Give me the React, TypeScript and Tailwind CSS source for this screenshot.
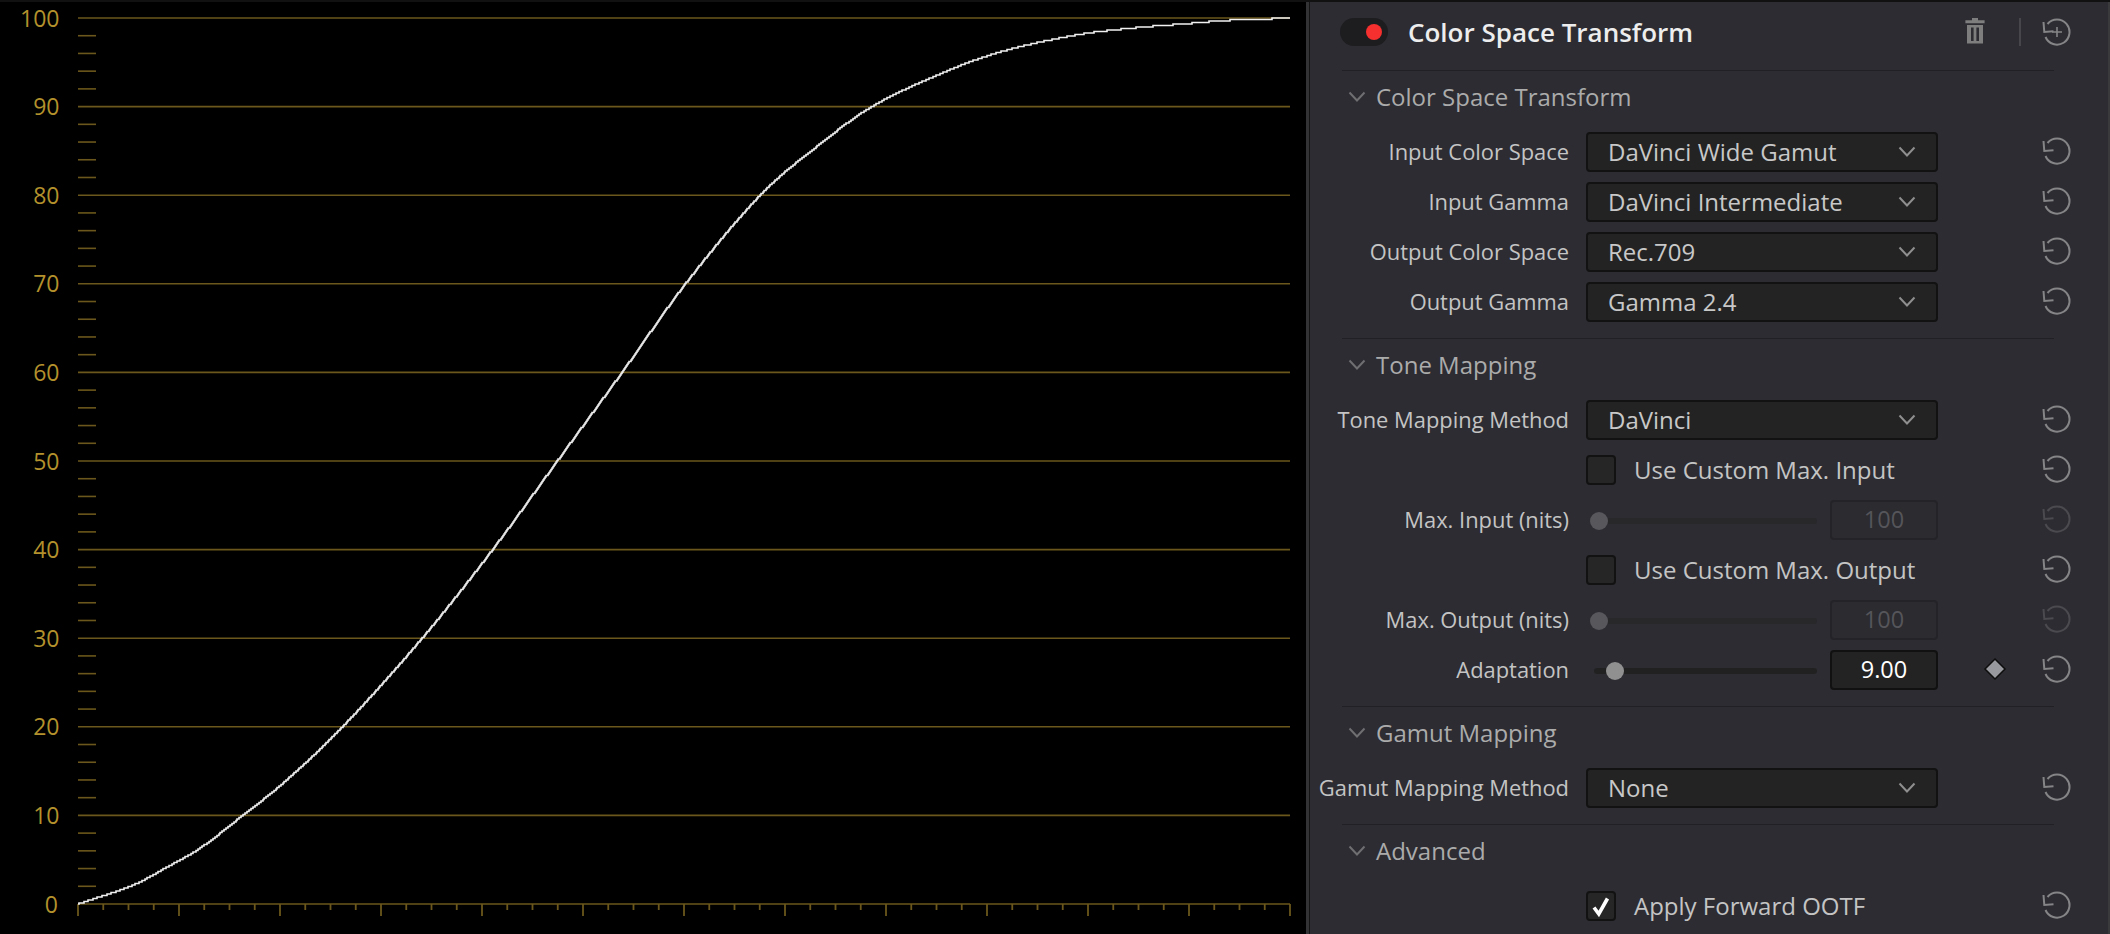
import React from "react";

const pts: [number, number][] = [
  [78, 904], [133, 885], [167, 867], [200, 848], [243, 815], [283, 783], [342, 727], [422, 638],
  [492, 550], [557, 461], [622, 372], [685, 284], [760, 195], [816, 147], [871, 107], [942, 73], [1000, 52],
  [1076, 35], [1133, 28], [1195, 23], [1225, 20.5], [1265, 19], [1290, 18],
];

function curvePath(): string {
  const n = pts.length;
  const slopes = pts.map((p, i) => {
    const a = pts[Math.max(0, i - 1)];
    const b = pts[Math.min(n - 1, i + 1)];
    return (b[1] - a[1]) / (b[0] - a[0]);
  });
  let d = `M78 904`;
  let seg = 0;
  let lastY = 904;
  for (let x = 79; x <= 1290; x += 1) {
    while (seg < n - 2 && x > pts[seg + 1][0]) seg++;
    const [x0, y0] = pts[seg];
    const [x1, y1] = pts[seg + 1];
    const h = x1 - x0;
    const t = (x - x0) / h;
    const y =
      (2 * t * t * t - 3 * t * t + 1) * y0 +
      (t * t * t - 2 * t * t + t) * h * slopes[seg] +
      (-2 * t * t * t + 3 * t * t) * y1 +
      (t * t * t - t * t) * h * slopes[seg + 1];
    const q = Math.round(y / 1.5) * 1.5;
    if (q !== lastY) {
      d += `H${x}V${q}`;
      lastY = q;
    }
  }
  d += `H1290`;
  return d;
}

const LINE = "#6b571b";
const LABEL = "#b3912c";
const yOf = (v: number) => 904 - v * 8.86;

function Chart() {
  const majors = Array.from({ length: 11 }, (_, i) => i * 10);
  const minorsY = Array.from({ length: 51 }, (_, i) => i * 2).filter((v) => v % 10 !== 0);
  const ticksX = Array.from({ length: 49 }, (_, i) => i);
  return (
    <svg viewBox="0 0 1306 932" className="block w-[1306px] h-[932px]">
      <g transform="translate(0,-2)">
        {majors.map((v) => (
          <line key={v} x1={78} x2={1290} y1={yOf(v)} y2={yOf(v)} stroke={LINE} strokeWidth={1.6} />
        ))}
        {minorsY.map((v) => (
          <line key={v} x1={78} x2={96} y1={yOf(v)} y2={yOf(v)} stroke={LINE} strokeWidth={1.6} />
        ))}
        {ticksX.map((i) => {
          const x = 78 + (i * 1212) / 48;
          return (
            <line
              key={i}
              x1={x}
              x2={x}
              y1={904}
              y2={i % 4 === 0 ? 916 : 910}
              stroke={LINE}
              strokeWidth={1.8}
            />
          );
        })}
        {majors.map((v) => (
          <text
            key={v}
            x={v === 0 ? 58 : 59.5}
            y={yOf(v) + 8.5}
            textAnchor="end"
            fill={LABEL}
            fontSize={23}
            fontFamily="'Open Sans', sans-serif"
          >
            {v}
          </text>
        ))}
        <path d={curvePath()} fill="none" stroke="#f2f2f2" strokeWidth={1.6} />
      </g>
    </svg>
  );
}

function ResetIcon({ plus, dim }: { plus?: boolean; dim?: boolean }) {
  const color = dim ? "#4a4a4f" : "#858587";
  return (
    <svg width="30" height="30" viewBox="0 0 30 30" fill="none" stroke={color} strokeWidth="2">
      <path d="M6.5 7A12.5 12.5 0 1 1 4.5 20" />
      <path d="M2.5 5 3.3 15 12.5 14.2" />
      {plus && <path d="M16 10V20M11 15H21" strokeWidth="1.6" />}
    </svg>
  );
}

function Chevron({ color = "#8f8f8f" }: { color?: string }) {
  return (
    <svg width="18" height="12" viewBox="0 0 18 12" fill="none" stroke={color} strokeWidth="2">
      <path d="M1.5 1.5 9 9.5 16.5 1.5" />
    </svg>
  );
}

function SectionHead({ title }: { title: string }) {
  return (
    <div className="h-[56px] flex items-center pb-[4px] pl-[38px]">
      <div className="mr-[10px]">
        <Chevron color="#6f6f72" />
      </div>
      <span className="text-[24px] text-[#ababab]">{title}</span>
    </div>
  );
}

function Row({
  label,
  children,
  trailing,
  dim,
}: {
  label?: string;
  children: React.ReactNode;
  trailing?: React.ReactNode;
  dim?: boolean;
}) {
  return (
    <div className="h-[50px] flex items-center">
      <div className="w-[259px] text-right text-[21.9px] text-[#c4c4c4] whitespace-nowrap">{label}</div>
      <div className="w-[352px] ml-[17px] flex items-center">{children}</div>
      <div className="w-[40px] ml-[38px] flex justify-center">{trailing}</div>
      <div className="ml-[25px] -mt-[2px] flex justify-center w-[30px]">
        <ResetIcon dim={dim} />
      </div>
    </div>
  );
}

function Select({ value }: { value: string }) {
  return (
    <div className="w-[352px] h-[40px] rounded-[4px] border-2 border-[#121212] bg-[#232323] flex items-center pl-[20px] pr-[20px] justify-between">
      <span className="text-[24px] text-[#c8c8c8]">{value}</span>
      <Chevron />
    </div>
  );
}

function Check({ label, checked }: { label: string; checked?: boolean }) {
  return (
    <div className="flex items-center -mt-px">
      <div className="w-[30px] h-[30px] rounded-[4px] border-2 border-[#121212] bg-[#262626] flex items-center justify-center">
        {checked && (
          <svg width="24" height="24" viewBox="0 0 24 24" fill="none" stroke="#ffffff" strokeWidth="3.6">
            <path d="M5 13.5 9.8 20 18.5 4.5" />
          </svg>
        )}
      </div>
      <span className="ml-[18px] text-[24px] text-[#c4c4c4] whitespace-nowrap">{label}</span>
    </div>
  );
}

function Slider({ value, active }: { value: string; active?: boolean }) {
  return (
    <div className="flex items-center w-full">
      <div className={`relative mt-[2px] h-[6px] w-[223px] ml-[8px] rounded-full ${active ? "bg-[#212121]" : "bg-[#28282b]"}`}>
        <div
          className={
            active
              ? "absolute left-[12px] -top-[6px] w-[18px] h-[18px] rounded-full bg-[#909090]"
              : "absolute -left-[4px] -top-[6px] w-[18px] h-[18px] rounded-full bg-[#57575c]"
          }
        />
      </div>
      <div
        className={
          active
            ? "ml-[13px] w-[108px] h-[40px] rounded-[4px] border-2 border-[#111111] bg-[#232323] flex items-center justify-center text-[23.5px] text-white"
            : "ml-[13px] w-[108px] h-[40px] rounded-[4px] border-2 border-[#242428] bg-[#2b2b30] flex items-center justify-center text-[23.5px] text-[#55555a]"
        }
      >
        {value}
      </div>
    </div>
  );
}

function Diamond() {
  return (
    <svg width="24" height="24" viewBox="0 0 24 24" className="-mt-[3px] -ml-[2px]">
      <path d="M12 2 22 12 12 22 2 12Z" fill="#98989f" stroke="#0e0e0e" strokeWidth="1.5" />
    </svg>
  );
}

function TrashIcon() {
  return (
    <svg width="22" height="28" viewBox="0 0 22 28" fill="#7e7e7e" className="-mt-[2px]">
      <path d="M8 1h6v2.2h6.6v3H1.4v-3H8z" />
      <path fillRule="evenodd" d="M3 8h16v18.5H3zM7 10.5v13.5h2.6V10.5zM12.4 10.5v13.5H15V10.5z" />
    </svg>
  );
}

const Divider = () => <div className="ml-[32px] w-[712px] h-px bg-[#212125]" />;

export default function App() {
  return (
    <div className="flex w-[2110px] h-[934px] overflow-hidden bg-[#111111] pt-[2px] font-['Open_Sans',sans-serif]">
      <div className="w-[1306px] h-[932px] bg-black">
        <Chart />
      </div>
      <div className="w-[3px] bg-[#333336]" />
      <div className="w-px bg-[#141414]" />
      <div className="w-[798px] bg-[#2c2c32]">
        <div className="h-[68px] flex items-center pb-[8px]">
          <div className="ml-[30px] w-[48px] h-[28px] rounded-full bg-[#1d1d20] flex items-center justify-end pr-[6px]">
            <div className="w-[16px] h-[16px] rounded-full bg-[#f5302e]" />
          </div>
          <span className="ml-[20px] text-[26px] font-semibold text-[#ededed] whitespace-nowrap">
            Color Space Transform
          </span>
          <div className="ml-auto flex items-center">
            <TrashIcon />
            <div className="ml-[33px] w-[2px] h-[28px] bg-[#47474b]" />
            <div className="ml-[20px] mr-[37px] -mt-[1px]">
              <ResetIcon plus />
            </div>
          </div>
        </div>
        <Divider />
        <SectionHead title="Color Space Transform" />
        <Row label="Input Color Space"><Select value="DaVinci Wide Gamut" /></Row>
        <Row label="Input Gamma"><Select value="DaVinci Intermediate" /></Row>
        <Row label="Output Color Space"><Select value="Rec.709" /></Row>
        <Row label="Output Gamma"><Select value="Gamma 2.4" /></Row>
        <div className="h-[11px]" />
        <Divider />
        <SectionHead title="Tone Mapping" />
        <Row label="Tone Mapping Method"><Select value="DaVinci" /></Row>
        <Row><Check label="Use Custom Max. Input" /></Row>
        <Row label="Max. Input (nits)" dim><Slider value="100" /></Row>
        <Row><Check label="Use Custom Max. Output" /></Row>
        <Row label="Max. Output (nits)" dim><Slider value="100" /></Row>
        <Row label="Adaptation" trailing={<Diamond />}><Slider value="9.00" active /></Row>
        <div className="h-[11px]" />
        <Divider />
        <SectionHead title="Gamut Mapping" />
        <Row label="Gamut Mapping Method"><Select value="None" /></Row>
        <div className="h-[11px]" />
        <Divider />
        <SectionHead title="Advanced" />
        <Row><Check label="Apply Forward OOTF" checked /></Row>
      </div>
      <div className="w-[2px] bg-[#3a3a3d]" />
    </div>
  );
}
